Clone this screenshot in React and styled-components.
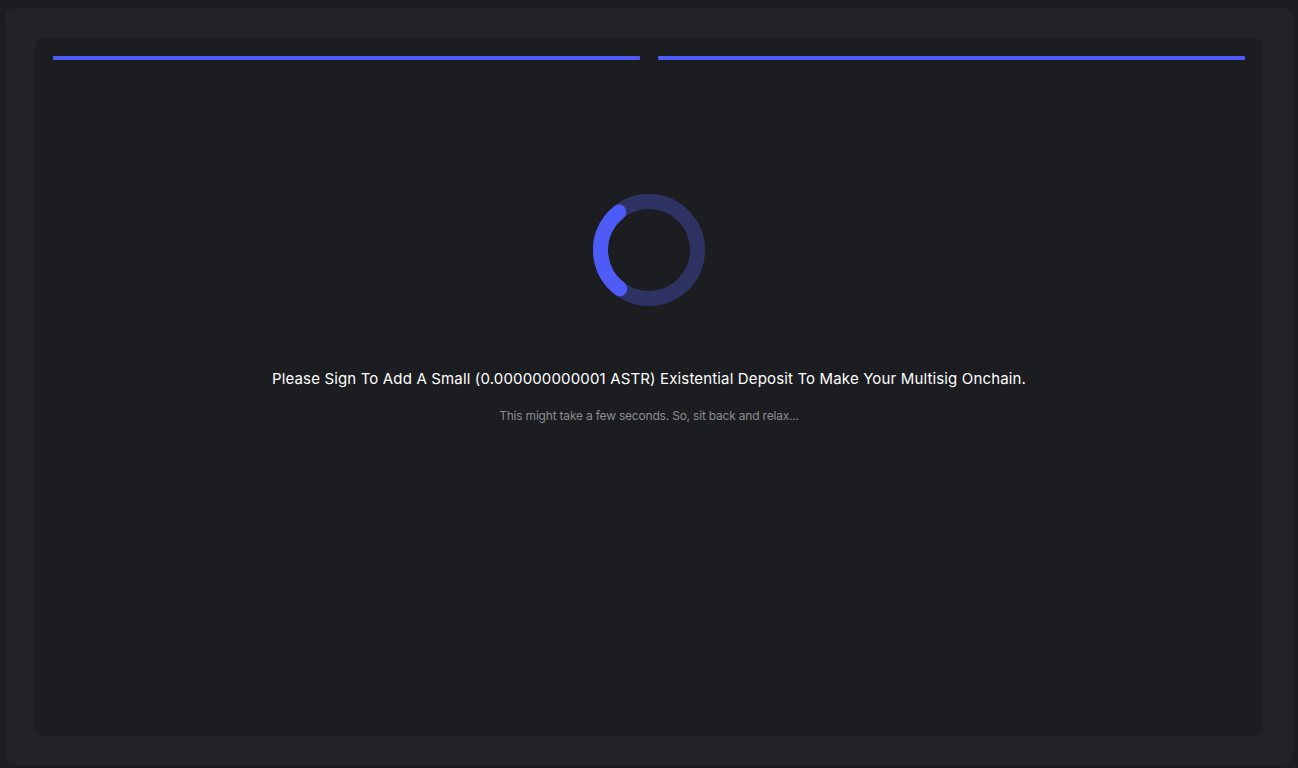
import styled, { createGlobalStyle } from "styled-components";

const GlobalStyle = createGlobalStyle`
    html, body {
        margin: 0;
        padding: 0;
        background: #1c1d21;
        font-family: "Inter", "Liberation Sans", sans-serif;
    }
    * {
        box-sizing: border-box;
    }
`

const Page = styled.div`
    width: 1298px;
    height: 768px;
    padding: 8px 5px 3px 5px;
    display: flex;
`

const Panel = styled.div`
    flex: 1;
    background: #222327;
    border-radius: 10px;
    padding: 30px 31px 29px 30px;
    display: flex;
`

const Card = styled.div`
    flex: 1;
    background: #1c1d21;
    border-radius: 8px;
    padding: 18px 17px 18px 18px;
    display: flex;
    flex-direction: column;
`

const Steps = styled.div`
    display: flex;
    gap: 18px;
`

const Step = styled.div`
    flex: 1;
    height: 4px;
    border-radius: 1px;
    background: ${({active}) => active ? '#4e5bf6' : '#2e3364'};
`

const Body = styled.div`
    display: flex;
    flex-direction: column;
    align-items: center;
    padding-top: 134px;
`

const Spinner = styled.svg`
    width: 112px;
    height: 112px;
    display: block;
`

const Title = styled.h2`
    margin: 62px 0 0;
    font-size: 15px;
    font-weight: 400;
    letter-spacing: 0.15px;
    line-height: 22px;
    color: #ffffff;
    text-align: center;
`

const Subtitle = styled.p`
    margin: 18px 0 0;
    font-size: 12px;
    letter-spacing: -0.2px;
    line-height: 16px;
    color: #8b8c92;
    text-align: center;
`

const Loader = () => {
    const r = 48.5
    const circ = 2 * Math.PI * r
    const arc = circ * 0.29
    return (
        <Spinner viewBox="0 0 112 112">
            <circle cx="56" cy="56" r={r} fill="none" stroke="#2e3364" strokeWidth="15" />
            <circle
                cx="56"
                cy="56"
                r={r}
                fill="none"
                stroke="#4e5bf6"
                strokeWidth="15"
                strokeLinecap="round"
                strokeDasharray={`${arc} ${circ}`}
                transform="rotate(127 56 56)"
            />
        </Spinner>
    )
}

const App = () => {
    return (
        <>
            <GlobalStyle />
            <Page>
                <Panel>
                    <Card>
                        <Steps>
                            <Step active />
                            <Step active />
                        </Steps>
                        <Body>
                            <Loader />
                            <Title>Please Sign To Add A Small (0.000000000001 ASTR) Existential Deposit To Make Your Multisig Onchain.</Title>
                            <Subtitle>This might take a few seconds. So, sit back and relax...</Subtitle>
                        </Body>
                    </Card>
                </Panel>
            </Page>
        </>
    )
}

export default App;
